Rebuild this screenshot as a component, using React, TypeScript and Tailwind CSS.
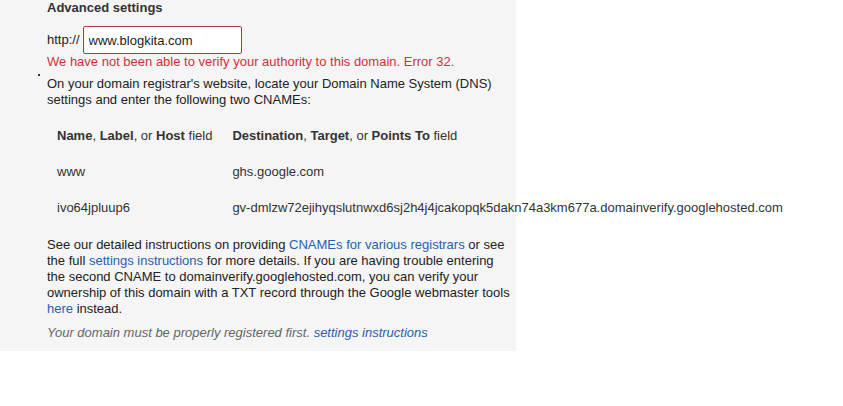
import React from 'react';

const font = { fontFamily: '"Liberation Sans", Arial, sans-serif' };

const Link: React.FC<{ children: React.ReactNode }> = ({ children }) => (
  <a href="#" className="text-[#2a5db0]">
    {children}
  </a>
);

const rows = [
  { host: 'www', target: 'ghs.google.com' },
  {
    host: 'ivo64jpluup6',
    target: 'gv-dmlzw72ejihyqslutnwxd6sj2h4j4jcakopqk5dakn74a3km677a.domainverify.googlehosted.com',
  },
];

export default function App() {
  return (
    <div className="w-[843px] h-[406px] bg-white text-[13px] leading-4 text-[#222]" style={font}>
      <div className="relative w-[516px] bg-[#f5f5f5] pl-[47px] pr-[3px] pb-[10px]">
        <h2 className="font-bold text-[#333]">Advanced settings</h2>

        <div className="mt-[10px] flex items-center gap-[3px]">
          <span>http://</span>
          <input
            readOnly
            value="www.blogkita.com"
            className="h-[28px] w-[159px] rounded-[2px] border border-[#b8343c] bg-white px-[5px] text-[13px] text-[#222] outline-none"
            style={font}
          />
        </div>

        <p className="text-[#d0303d]">
          We have not been able to verify your authority to this domain. Error 32.
        </p>

        <span className="absolute left-[38px] top-[74px] h-[2px] w-[2px] bg-[#333]" />

        <p className="mt-[6px] w-[460px]">
          On your domain registrar's website, locate your Domain Name System (DNS) settings and enter
          the following two CNAMEs:
        </p>

        <table className="mt-[10px] border-collapse text-[#333]">
          <thead>
            <tr className="h-9">
              <th className="px-[10px] text-left font-normal whitespace-nowrap">
                <b>Name</b>, <b>Label</b>, or <b>Host</b> field
              </th>
              <th className="px-[10px] text-left font-normal whitespace-nowrap">
                <b>Destination</b>, <b>Target</b>, or <b>Points To</b> field
              </th>
            </tr>
          </thead>
          <tbody>
            {rows.map((r) => (
              <tr key={r.host} className="h-9">
                <td className="px-[10px] whitespace-nowrap">{r.host}</td>
                <td className="px-[10px] whitespace-nowrap">{r.target}</td>
              </tr>
            ))}
          </tbody>
        </table>

        <p className="mt-[11px] w-[466px]">
          See our detailed instructions on providing <Link>CNAMEs for various registrars</Link> or see
          the full <Link>settings instructions</Link> for more details. If you are having trouble
          entering the second CNAME to domainverify.googlehosted.com, you can verify your ownership of
          this domain with a TXT record through the Google webmaster tools <Link>here</Link> instead.
        </p>

        <p className="mt-[8px] italic text-[#666]">
          Your domain must be properly registered first. <Link>settings instructions</Link>
        </p>
      </div>
    </div>
  );
}
